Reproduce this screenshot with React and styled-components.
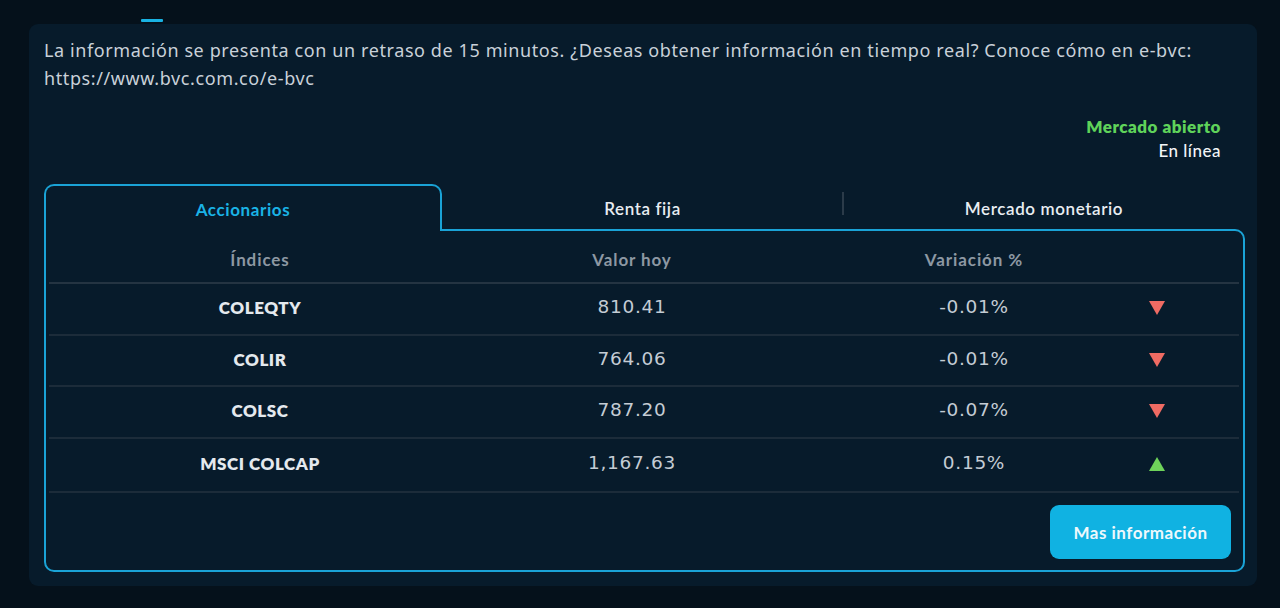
import React from "react";
import styled, { createGlobalStyle } from "styled-components";

const Global = createGlobalStyle`
  html, body { margin: 0; padding: 0; background: #05111b; }
  body { font-family: "Noto Sans", "Open Sans", sans-serif; }
  * { box-sizing: border-box; }
`;

const Page = styled.div`
  width: 1280px;
  height: 608px;
  background: #05111b;
  padding: 19px 23px 0 29px;
  display: flex;
  flex-direction: column;
`;

const TopIndicator = styled.div`
  width: 22px;
  height: 3px;
  margin-left: 112px;
  background: #19b2e2;
  border-radius: 1px;
`;

const Card = styled.section`
  margin-top: 2px;
  width: 1228px;
  height: 562px;
  background: #071b2b;
  border-radius: 9px;
  padding: 12px 12px 0 15px;
  display: flex;
  flex-direction: column;
`;

const Notice = styled.p`
  margin: 0;
  color: #c9d1d9;
  font-size: 18px;
  letter-spacing: 0.6px;
  line-height: 28px;
  width: 1195px;
`;

const Status = styled.div`
  margin-top: 23px;
  padding-right: 24px;
  display: flex;
  flex-direction: column;
  align-items: flex-end;
  font-family: "Lato", "Noto Sans", sans-serif;
  font-size: 17px;
  line-height: 24px;
  letter-spacing: 0.5px;
`;

const StatusLine = styled.span`
  color: ${(p) => p.$color};
  font-weight: ${(p) => p.$weight};
`;

const Tabs = styled.div`
  margin-top: 21px;
  width: 1201px;
  display: flex;
  flex-direction: column;
`;

const TabRow = styled.div`
  display: flex;
  height: 45px;
  align-items: flex-start;
`;

const Tab = styled.button`
  all: unset;
  box-sizing: border-box;
  width: ${(p) => p.$w}px;
  height: ${(p) => (p.$active ? 47 : 45)}px;
  display: flex;
  align-items: flex-start;
  justify-content: center;
  position: relative;
  z-index: ${(p) => (p.$active ? 2 : 1)};
  font-family: "Lato", "Noto Sans", sans-serif;
  font-size: 17px;
  line-height: 24px;
  letter-spacing: 0.6px;
  font-weight: ${(p) => (p.$active ? 700 : 600)};
  color: ${(p) => (p.$active ? "#1ab3e6" : "#e8edf2")};
  background: ${(p) => (p.$active ? "#071b2b" : "transparent")};
  border: ${(p) => (p.$active ? "2px solid #1aa3d6" : "none")};
  border-bottom: none;
  border-radius: ${(p) => (p.$active ? "10px 10px 0 0" : "0")};
  padding-top: ${(p) => (p.$active ? 12 : 13)}px;
`;

const Divider = styled.span`
  position: absolute;
  left: -1px;
  top: 8px;
  width: 2px;
  height: 23px;
  background: #2b3b49;
`;

const Panel = styled.div`
  border: 2px solid #1aa3d6;
  border-radius: 0 10px 10px 10px;
  height: 343px;
  padding: 0 4px 0 3px;
  display: flex;
  flex-direction: column;
`;

const TableGrid = styled.div`
  display: grid;
  grid-template-columns: 422px 322px 340px 1fr;
`;

const HeadCell = styled.div`
  height: 53px;
  display: flex;
  align-items: center;
  justify-content: center;
  padding-top: 5px;
  padding-left: ${(p) => p.$pl || 0}px;
  font-family: "Lato", "Noto Sans", sans-serif;
  font-weight: 700;
  font-size: 17px;
  letter-spacing: 0.9px;
  color: #8d98a3;
  border-bottom: 2px solid #243442;
`;

const Cell = styled.div`
  height: ${(p) => p.$h}px;
  display: flex;
  align-items: center;
  justify-content: ${(p) => (p.$start ? "flex-start" : "center")};
  padding-left: ${(p) => p.$pl || 0}px;
  padding-bottom: ${(p) => (p.$bold ? 3 : p.$start ? 2 : 5)}px;
  font-family: ${(p) =>
    p.$bold ? `"Lato", "Noto Sans", sans-serif` : `"DejaVu Sans", "Noto Sans", sans-serif`};
  font-weight: ${(p) => (p.$bold ? 800 : 400)};
  font-size: ${(p) => (p.$bold ? "17px" : "18.5px")};
  letter-spacing: ${(p) => (p.$bold ? "0.55px" : "0.7px")};
  color: ${(p) => (p.$bold ? "#e4e9ee" : "#c4ccd4")};
  border-bottom: 2px solid #1c2c3a;
`;

const Footer = styled.div`
  flex: 1;
  display: flex;
  justify-content: flex-end;
  align-items: flex-start;
  padding-top: 12px;
  padding-right: 8px;
`;

const MoreButton = styled.button`
  all: unset;
  box-sizing: border-box;
  width: 181px;
  height: 54px;
  border-radius: 9px;
  background: #10b2e2;
  color: #eef8fc;
  font-family: "Lato", "Noto Sans", sans-serif;
  font-weight: 700;
  font-size: 17px;
  letter-spacing: 0.5px;
  display: flex;
  align-items: center;
  justify-content: center;
`;

const Arrow = ({ up }) => (
  <svg width="18" height="16" viewBox="0 0 18 16">
    {up ? (
      <polygon points="9,1 17,15 1,15" fill="#6ed35a" />
    ) : (
      <polygon points="1,1 17,1 9,15" fill="#ef6b63" />
    )}
  </svg>
);

const rows = [
  { name: "COLEQTY", value: "810.41", change: "-0.01%", up: false, h: 52 },
  { name: "COLIR", value: "764.06", change: "-0.01%", up: false, h: 51 },
  { name: "COLSC", value: "787.20", change: "-0.07%", up: false, h: 52 },
  { name: "MSCI COLCAP", value: "1,167.63", change: "0.15%", up: true, h: 54 },
];

export default function App() {
  return (
    <>
      <Global />
      <Page>
        <TopIndicator />
        <Card>
          <Notice>
            La información se presenta con un retraso de 15 minutos. ¿Deseas obtener información en
            tiempo real? Conoce cómo en e-bvc: https://www.bvc.com.co/e-bvc
          </Notice>
          <Status>
            <StatusLine $color="#5fd35a" $weight={800}>Mercado abierto</StatusLine>
            <StatusLine $color="#f2f5f8" $weight={500}>En línea</StatusLine>
          </Status>
          <Tabs>
            <TabRow>
              <Tab $active $w={398}>Accionarios</Tab>
              <Tab $w={401}>Renta fija</Tab>
              <Tab $w={402}>
                <Divider />
                Mercado monetario
              </Tab>
            </TabRow>
            <Panel>
              <TableGrid>
                <HeadCell>Índices</HeadCell>
                <HeadCell>Valor hoy</HeadCell>
                <HeadCell $pl={22}>Variación %</HeadCell>
                <HeadCell />
                {rows.map((r) => (
                  <React.Fragment key={r.name}>
                    <Cell $h={r.h} $bold>{r.name}</Cell>
                    <Cell $h={r.h}>{r.value}</Cell>
                    <Cell $h={r.h} $pl={22}>{r.change}</Cell>
                    <Cell $h={r.h} $start $pl={15}>
                      <Arrow up={r.up} />
                    </Cell>
                  </React.Fragment>
                ))}
              </TableGrid>
              <Footer>
                <MoreButton>Mas información</MoreButton>
              </Footer>
            </Panel>
          </Tabs>
        </Card>
      </Page>
    </>
  );
}
